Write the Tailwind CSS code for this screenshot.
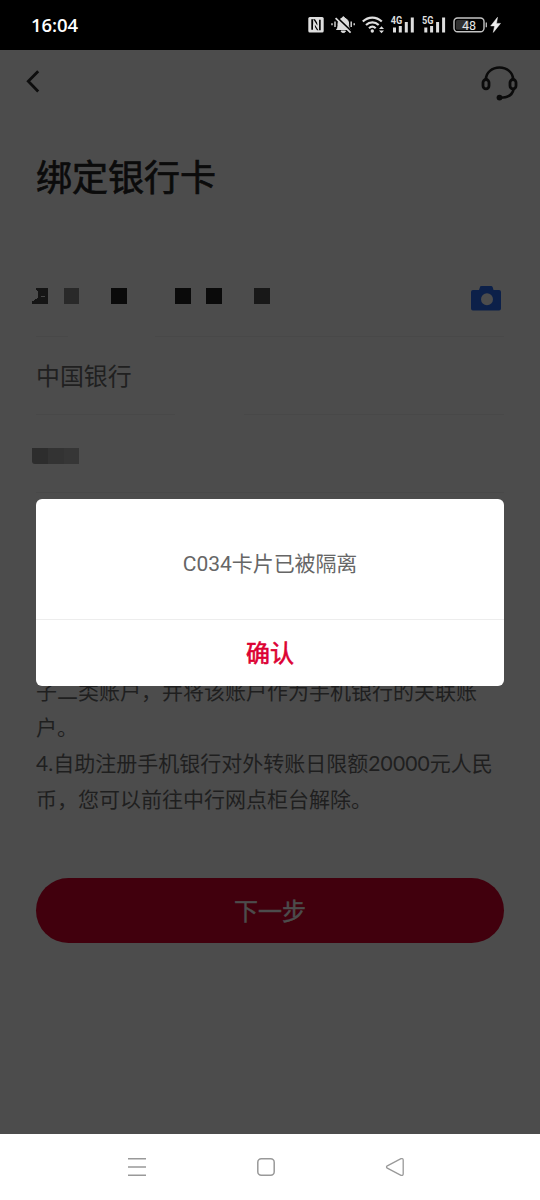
<!DOCTYPE html>
<html lang="zh-CN">
<head>
<meta charset="utf-8">
<title>绑定银行卡</title>
<script src="https://cdn.jsdelivr.net/npm/@tailwindcss/browser@4"></script>
</head>
<body class="w-[540px] h-[1200px] overflow-hidden bg-[#4c4c4c] font-['Noto_Sans_CJK_SC',sans-serif]">
<div class="relative flex h-[1200px] w-[540px] flex-col">
  <!-- Status bar -->
  <header class="flex h-[50px] shrink-0 items-center justify-between bg-black pl-[31px]">
    <span class="font-['Open_Sans','Noto_Sans',sans-serif] text-[18.5px] font-semibold leading-none tracking-[-0.1px] text-white">16:04</span>
    <svg class="h-[50px] w-[240px]" viewBox="300 0 240 50" fill="none">
      <rect x="308.3" y="17" width="15.400" height="15.600" rx="1.500" fill="#dedede"/>
      <path d="M311.300 19.300h3.700l4 6.500v-6h1.700v10.500h-3.700l-4-6.500v6h-1.700z" fill="#000"/>
      <path d="M314 30v-8.200l4.200 6.600v-8.400" stroke="#dedede" stroke-width="1.700"/>
      <path d="M336.500 29.500c1.600-1.500 1.500-3 1.500-5.500c0-3.200 2-5.200 4-5.700c.3-2 2.500-2 2.800 0c2.600.8 3.800 2.700 3.800 5.700c0 2.500 0 4 1.800 5.500zM341 31h4.500c-.6 2.100-3.900 2.100-4.500 0z" fill="#dedede" stroke="#dedede" stroke-width="1"/>
      <path d="M337 17.500l14.500 14" stroke="#000" stroke-width="1.800"/>
      <path d="M335.600 18.200l15 14.500" stroke="#dedede" stroke-width="1.700"/>
      <path d="M332 23.200v2M335 21.500v5.500M351.200 21.500v5.500M354.200 23.200v2" stroke="#dedede" stroke-width="1.400"/>
      <path d="M362.800 21.500c5.500-5.300 13.500-5.300 19 0M366 25c3.700-3.500 9-3.500 12.700 0M369 28.300c2-1.900 4.700-1.900 6.700 0" stroke="#dedede" stroke-width="2.200"/>
      <circle cx="372.300" cy="31" r="1.700" fill="#dedede"/>
      <path d="M379 29l2.500-2.700L384 29zM379 30.500h5l-2.500 2.700z" fill="#dedede"/>
      <path d="M393 27.500h3v5h-3zM398.800 26h3v6.500h-3zM404.800 22h3v10.500h-3zM410.800 17.500h3v15h-3z" fill="#dedede"/>
      <path d="M424.300 27.500h3v5h-3zM430.100 26h3v6.500h-3zM436.100 22h3v10.500h-3zM442.100 17.500h3v15h-3z" fill="#dedede"/>
      <text x="390.700" y="24.400" textLength="11.500" lengthAdjust="spacingAndGlyphs" class="fill-[#dedede] font-['Roboto'] text-[10.500px] font-bold">4G</text>
      <text x="421.900" y="24.400" textLength="11.500" lengthAdjust="spacingAndGlyphs" class="fill-[#dedede] font-['Roboto'] text-[10.500px] font-bold">5G</text>
      <rect x="454" y="18" width="30" height="13.800" rx="3.500" stroke="#c4c4c4" stroke-width="1.400"/>
      <rect x="456" y="20" width="13" height="9.800" rx="1.500" fill="#303030"/>
      <path d="M486.300 22.500v4.800" stroke="#bdbdbd" stroke-width="1.300"/>
      <text x="469" y="29.600" text-anchor="middle" class="fill-[#e6e6e6] font-['Roboto'] text-[12.500px] font-normal">48</text>
      <path d="M497.500 17.300l-6.800 8.600h3.900l-1.300 6.500 7.200-9h-4z" fill="#eee" stroke="#eee" stroke-width=".5"/>
    </svg>
  </header>

  <main class="flex h-[1084px] shrink-0 flex-col px-9">
    <!-- Toolbar -->
    <div class="-mx-9 flex h-[64px] shrink-0 items-start justify-between">
      <svg class="h-[64px] w-[60px]" viewBox="0 50 60 64" fill="none"><path d="M38.200 71.200L28.300 81.300l9.900 10.100" stroke="#0d0d0d" stroke-width="2.800"/></svg>
      <svg class="h-[64px] w-[80px]" viewBox="460 50 80 64" fill="none" stroke="#0b0b0b">
        <path d="M486 79.500v-.5a13.400 11.400 0 0 1 27 0v.5M513.600 89c-1 6-6 8.700-13.600 8.700" stroke-width="2.600"/>
        <rect x="483" y="79.500" width="6" height="9.300" rx="3" stroke-width="2.800"/>
        <rect x="510" y="79.500" width="6" height="9.300" rx="3" stroke-width="2.800"/>
        <circle cx="499.500" cy="97.600" r="2.900" fill="#0b0b0b" stroke="none"/>
      </svg>
    </div>
    <h1 class="mt-[34px] h-[54px] shrink-0 text-[36px] font-normal leading-[54px] text-[#0b0b0b] [-webkit-text-stroke:0.700px_#0b0b0b]">绑定银行卡</h1>

    <!-- Card number -->
    <div class="-ml-1 mt-[56px] flex h-[79px] shrink-0 items-start justify-between pt-[27px]">
      <svg class="mt-[3px] h-4 w-[240px]" viewBox="32 288 240 16" shape-rendering="crispEdges">
        <path d="M36 288h12v16H32v-2.500l4-2.500 2-2v-5l-2-3z" fill="#151515"/>
        <path d="M40 297l2-1h2l1 1z" fill="#454545"/>
        <path d="M64 288h15v16H64z" fill="#292929"/>
        <path d="M111 288h16v16h-16zM175 288h16v16h-16zM206 288h16v16h-16z" fill="#0a0a0a"/>
        <path d="M254 288h16v16h-16z" fill="#181818"/>
      </svg>
      <svg class="mr-[3px] h-[26px] w-[30px]" viewBox="0 0 30 26"><path fill="#0c2049" fill-rule="evenodd" d="M2 5h6l1.300-3.700Q9.700 1 11 1h9q1.300 0 1.700 1.200L22.500 5H28q2 0 2 2v16.500q0 2-2 2H2q-2 0-2-2V7q0-2 2-2zm14 3.200a6 6 0 1 0 0 12 6 6 0 0 0 0-12z"/></svg>
    </div>
    <div class="-mt-px flex h-px shrink-0 justify-between"><i class="w-8 bg-[#484848]"></i><i class="w-[349px] bg-[#484848]"></i></div>
    <!-- Bank -->
    <div class="flex h-[77px] shrink-0 items-center pb-[2px] text-[23.900px] text-[#202020]"><span class="leading-9">中国银行</span></div>
    <div class="flex h-px shrink-0 justify-between"><i class="w-[139px] bg-[#484848]"></i><i class="w-[260px] bg-[#484848]"></i></div>
    <!-- Holder -->
    <div class="-ml-1 flex h-[77px] shrink-0 items-start pt-[33px]">
      <i class="h-4 w-4 rounded-bl-[3px] bg-[#2d2d2d]"></i><i class="h-4 w-4 bg-[#333]"></i><i class="h-4 w-[15px] bg-[#363636]"></i>
    </div>
    <div class="h-px shrink-0 bg-[#484848]"></div>

    <!-- Notes -->
    <div class="mt-[179px] h-36 shrink-0 whitespace-nowrap text-[21px] leading-9 text-[#1f1f1f]">
      <p class="h-9">子二类账户，并将该账户作为手机银行的关联账</p>
      <p class="h-9">户。</p>
      <p class="h-9"><span class="font-['Lato'] leading-none tracking-[0.100px]">4.</span>自助注册手机银行对外转账日限额<span class="font-['Lato'] leading-none tracking-[0.100px]">20000</span>元人民</p>
      <p class="h-9">币，您可以前往中行网点柜台解除。</p>
    </div>
    <button class="mt-[62px] h-[65.400px] shrink-0 rounded-full bg-[#41000d] pb-[2px] text-[24px] font-normal text-[#4c4c4c] [-webkit-text-stroke:0.500px_#4c4c4c]">下一步</button>
  </main>

  <!-- Alert dialog -->
  <section class="absolute left-9 top-[498.500px] flex h-[187.500px] w-[468px] flex-col rounded-[6px] bg-white text-center">
    <p class="flex h-[121px] shrink-0 items-center justify-center border-b border-[#ededed] pt-[9px] text-[21px] text-[#666]"><span class="pt-[3px] font-['Roboto']">C034</span><span class="tracking-[-0.100px]">卡片已被隔离</span></p>
    <button class="grow pb-0.5 text-[24px] font-normal text-[#dc0032] [-webkit-text-stroke:0.600px_#dc0032]">确认</button>
  </section>

  <!-- System navigation -->
  <nav class="h-[66px] shrink-0 bg-white">
    <svg class="h-[66px] w-[540px]" viewBox="0 1134 540 66" fill="none" stroke="#999" stroke-width="1.500">
      <path d="M128 1158.800h18M128 1167h18M128 1175.200h18"/>
      <rect x="257.800" y="1158.800" width="16.400" height="16.400" rx="3.500"/>
      <path stroke-width="1.300" d="M387.300 1165.800l13.700-7.100q2.200-.7 2.200 1.500v13.600q0 2.200-2.200 1.500l-13.700-7.100q-1.600-1.200 0-2.400z"/>
    </svg>
  </nav>
</div>
</body>
</html>
